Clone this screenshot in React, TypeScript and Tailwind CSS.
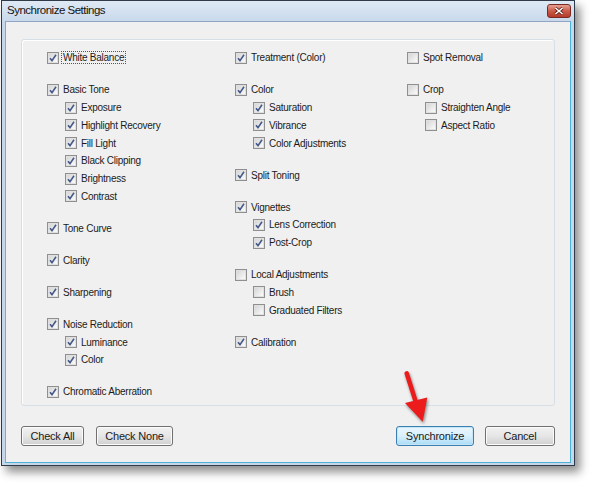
import React from "react";

type Item = { label: string; checked: boolean; focus?: boolean; children?: Item[] };

const col1: Item[] = [
  { label: "White Balance", checked: true, focus: true },
  {
    label: "Basic Tone",
    checked: true,
    children: [
      { label: "Exposure", checked: true },
      { label: "Highlight Recovery", checked: true },
      { label: "Fill Light", checked: true },
      { label: "Black Clipping", checked: true },
      { label: "Brightness", checked: true },
      { label: "Contrast", checked: true },
    ],
  },
  { label: "Tone Curve", checked: true },
  { label: "Clarity", checked: true },
  { label: "Sharpening", checked: true },
  {
    label: "Noise Reduction",
    checked: true,
    children: [
      { label: "Luminance", checked: true },
      { label: "Color", checked: true },
    ],
  },
  { label: "Chromatic Aberration", checked: true },
];

const col2: Item[] = [
  { label: "Treatment (Color)", checked: true },
  {
    label: "Color",
    checked: true,
    children: [
      { label: "Saturation", checked: true },
      { label: "Vibrance", checked: true },
      { label: "Color Adjustments", checked: true },
    ],
  },
  { label: "Split Toning", checked: true },
  {
    label: "Vignettes",
    checked: true,
    children: [
      { label: "Lens Correction", checked: true },
      { label: "Post-Crop", checked: true },
    ],
  },
  {
    label: "Local Adjustments",
    checked: false,
    children: [
      { label: "Brush", checked: false },
      { label: "Graduated Filters", checked: false },
    ],
  },
  { label: "Calibration", checked: true },
];

const col3: Item[] = [
  { label: "Spot Removal", checked: false },
  {
    label: "Crop",
    checked: false,
    children: [
      { label: "Straighten Angle", checked: false },
      { label: "Aspect Ratio", checked: false },
    ],
  },
];

function Box({ checked }: { checked: boolean }) {
  return (
    <span className="flex h-[12px] w-[12px] shrink-0 items-center justify-center border border-[#8f8f8f] bg-[#f4f4f4]">
      <span className="flex h-[10px] w-[10px] items-center justify-center border border-[#e0e0e0] bg-gradient-to-br from-[#d6d6d6] to-[#fbfbfb]">
        {checked && (
          <svg width="8" height="8" viewBox="0 0 8 8">
            <path d="M1 4.2 L3 6.6 L7 0.8" fill="none" stroke="#44598a" strokeWidth="1.6" />
          </svg>
        )}
      </span>
    </span>
  );
}

function Row({ item }: { item: Item }) {
  return (
    <div className="flex h-[17.75px] items-center gap-[2px]">
      <Box checked={item.checked} />
      <span
        className={
          item.focus
            ? "border border-dotted border-[#555] px-[1px] leading-[11px]"
            : "px-[2px] leading-[11px]"
        }
      >
        {item.label}
      </span>
    </div>
  );
}

function Column({ items }: { items: Item[] }) {
  return (
    <div className="flex flex-col gap-[14.25px]">
      {items.map((it) => (
        <div key={it.label}>
          <Row item={it} />
          {it.children && (
            <div className="pl-[18px]">
              {it.children.map((c) => (
                <Row key={c.label} item={c} />
              ))}
            </div>
          )}
        </div>
      ))}
    </div>
  );
}

function Button({ label, w, primary }: { label: string; w: string; primary?: boolean }) {
  return (
    <button
      type="button"
      className={`flex h-[20px] items-center justify-center rounded-[3px] border text-[11px] tracking-[-0.2px] text-[#1a1a1a] ${w} ${
        primary
          ? "border-[#3c7fb1] bg-gradient-to-b from-[#eaf6fd] via-[#d9f0fc] to-[#a9dbf6] shadow-[inset_0_0_0_1px_#c4e5f6]"
          : "border-[#707070] bg-gradient-to-b from-[#f2f2f2] via-[#e6e6e6] to-[#cfcfcf] shadow-[inset_0_0_0_1px_#fbfbfb]"
      }`}
    >
      {label}
    </button>
  );
}

export default function App() {
  return (
    <div className="relative h-[483px] w-[591px] overflow-hidden bg-white font-['Liberation_Sans',Arial,sans-serif] text-[10px] tracking-[-0.25px] text-[#1b1b1b]">
      <div className="ml-[1px] flex h-[466px] w-[574px] flex-col border border-[#2f3b48] bg-[#c6d7ea] shadow-[5px_6px_9px_rgba(0,0,0,0.45)]">
        <div className="flex h-[20px] items-center justify-between bg-gradient-to-b from-[#dfe9f5] to-[#c9d9eb] pl-[5px] pr-[3px]">
          <span className="text-[11.5px] tracking-[-0.5px] text-[#141414]">Synchronize Settings</span>
          <span className="flex h-[14px] w-[24px] items-center justify-center rounded-[3px] border border-[#7a2a22] bg-gradient-to-b from-[#e4a193] via-[#cb5a48] to-[#b43a28]">
            <svg width="10" height="8" viewBox="0 0 10 8">
              <path d="M1.5 1 L8.5 7 M8.5 1 L1.5 7" stroke="#5a1a12" strokeWidth="3" />
              <path d="M1.5 1 L8.5 7 M8.5 1 L1.5 7" stroke="#ffffff" strokeWidth="1.6" />
            </svg>
          </span>
        </div>
        <div className="mx-[3px] mb-[2px] flex flex-1 flex-col border border-[#8ea6c1] border-b-[#4fb0d6] border-r-[#4fb0d6] bg-[#f0f0f0] pl-[15px] pt-[17px]">
          <div className="grid h-[367px] w-[534px] grid-cols-[188px_172px_1fr] rounded-[3px] border border-[#d5dfe5] pl-[25px] pt-[9px] shadow-[inset_1px_1px_0_#ffffff]">
            <Column items={col1} />
            <Column items={col2} />
            <Column items={col3} />
          </div>
          <div className="mt-[20px] flex w-[534px] justify-between">
            <div className="flex gap-[12px]">
              <Button label="Check All" w="w-[63px]" />
              <Button label="Check None" w="w-[77px]" />
            </div>
            <div className="flex gap-[11px]">
              <Button label="Synchronize" w="w-[78px]" primary />
              <Button label="Cancel" w="w-[70px]" />
            </div>
          </div>
        </div>
      </div>
      <svg
        className="absolute left-[398px] top-[368px]"
        width="36"
        height="60"
        viewBox="398 368 36 60"
        style={{ filter: "drop-shadow(1px 2px 1.5px rgba(0,0,0,0.45))" }}
      >
        <path d="M406.7 373.3 L415.5 401" stroke="#ec1c1c" strokeWidth="4.5" strokeLinecap="round" />
        <path d="M405 403 L427.3 397.5 L422.7 421.7 Z" fill="#ec1c1c" />
      </svg>
    </div>
  );
}
